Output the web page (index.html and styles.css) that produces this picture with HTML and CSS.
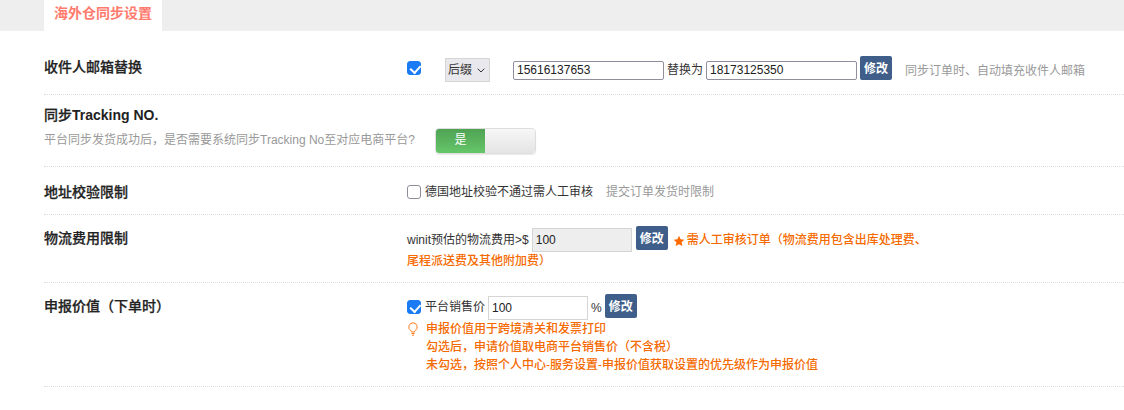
FILE: index.html
```html
<!DOCTYPE html>
<html lang="zh-CN">
<head>
<meta charset="utf-8">
<title>海外仓同步设置</title>
<link rel="stylesheet" href="styles.css">
</head>
<body>
<div class="tabbar"><div class="tab">海外仓同步设置</div></div>
<div class="settings">
  <section class="row row-email">
    <div class="label">收件人邮箱替换</div>
    <div class="controls line email-line">
      <input class="check raised" type="checkbox" checked>
      <span class="select-wrap">
        <select class="select"><option>后缀</option></select>
        <svg class="chevron" viewBox="0 0 8 5" width="8" height="5"><path d="M.7.7 4 4l3.3-3.3" fill="none" stroke="#333" stroke-width="1"/></svg>
      </span>
      <input class="text first" type="text" value="15616137653">
      <span class="between">替换为</span>
      <input class="text" type="text" value="18173125350">
      <button class="btn raised">修改</button>
      <span class="hint hint-email">同步订单时、自动填充收件人邮箱</span>
    </div>
  </section>
  <section class="row row-tracking">
    <div class="label-wide">
      <div class="label">同步<span class="latin">Tracking NO.</span></div>
      <div class="desc">平台同步发货成功后，是否需要系统同步Tracking No至对应电商平台?</div>
    </div>
    <div class="toggle"><span class="toggle-on">是</span><span class="toggle-off"></span></div>
  </section>
  <section class="row row-address">
    <div class="label">地址校验限制</div>
    <div class="controls line">
      <input class="check" type="checkbox">
      <span class="check-text">德国地址校验不通过需人工审核</span>
      <span class="hint hint-address">提交订单发货时限制</span>
    </div>
  </section>
  <section class="row row-freight">
    <div class="label">物流费用限制</div>
    <div class="controls">
      <div class="line">
        <span>winit预估的物流费用&gt;$</span>
        <input class="num disabled" type="text" value="100" readonly>
        <button class="btn raised freight-btn">修改</button>
        <svg class="star" viewBox="0 0 24 24" width="12" height="12"><path d="M12 1.5l3.2 7 7.6.9-5.6 5.2 1.5 7.6L12 18.4l-6.7 3.8 1.5-7.6L1.200 9.400l7.600-.9z" fill="#ff6a00"/></svg>
        <span class="warn warn-first">需人工审核订单（物流费用包含出库处理费、</span>
      </div>
      <div class="warn warn-second">尾程派送费及其他附加费）</div>
    </div>
  </section>
  <section class="row row-declare">
    <div class="label">申报价值（下单时）</div>
    <div class="controls">
      <div class="line declare-line">
        <input class="check" type="checkbox" checked>
        <span class="check-text">平台销售价</span>
        <input class="num" type="text" value="100">
        <span class="percent">%</span>
        <button class="btn raised">修改</button>
      </div>
      <div class="notes">
        <svg class="bulb" viewBox="0 0 12 14" width="12" height="14"><path d="M6 .8a4.200 4.200 0 0 0-2.300 7.700c.5.4.8.9.8 1.500h3c0-.6.3-1.100.8-1.500A4.200 4.200 0 0 0 6 .8z" fill="none" stroke="#ff7a1a" stroke-width="1"/><path d="M4.500 11.500h3M5 13.200h2" stroke="#ff7a1a" stroke-width="1" fill="none"/></svg>
        <div class="warn note-text">申报价值用于跨境清关和发票打印<br>勾选后，申请价值取电商平台销售价（不含税）<br>未勾选，按照个人中心-服务设置-申报价值获取设置的优先级作为申报价值</div>
      </div>
    </div>
  </section>
</div>
</body>
</html>
```
FILE: styles.css
```css
* { box-sizing: border-box; }
html, body { margin: 0; padding: 0; }
body {
  background: #fff;
  color: #333;
  font-family: "Liberation Sans", "Noto Sans CJK SC", sans-serif;
  font-size: 12px;
  line-height: 18px;
  width: 1124px;
  height: 410px;
  overflow: hidden;
}
.tabbar { height: 31px; background: #eee; padding-left: 44px; }
.tab {
  width: 118px; height: 31px; background: #fff; color: #ff7b6e;
  font-size: 14px; font-weight: 700; line-height: 27px; text-align: center;
}
.settings { padding-left: 44px; }
.row { display: flex; align-items: flex-start; border-bottom: 1px dotted #ddd; }
.row-email { height: 64px; padding-top: 26px; }
.email-line { margin-top: 1px; }
.row-tracking { height: 72px; padding-top: 10px; }
.row-address { height: 48px; padding-top: 15px; }
.row-address .line { margin-top: 1px; }
.row-freight { height: 68px; padding-top: 13px; }
.row-declare { height: 104px; padding-top: 13px; }
.label { width: 363px; flex: none; font-size: 14px; font-weight: 500; line-height: 20px; color: #222; -webkit-text-stroke: .25px #222; }
.latin { font-weight: 700; -webkit-text-stroke: 0; }
.label-wide { width: 391px; flex: none; }
.label-wide .label { width: auto; }
.desc { color: #999; font-size: 12px; margin-top: 6px; white-space: nowrap; }
.controls { flex: none; }
.line { display: flex; align-items: center; white-space: nowrap; }
.check {
  appearance: none; -webkit-appearance: none; margin: 0; width: 14px; height: 14px;
  flex: none; position: relative; background: #fff; border: 1.5px solid #8e8e9a; border-radius: 3px;
}
.check:checked { background: #1a7bf5; border-color: #1a7bf5; }
.check:checked::after {
  content: ""; position: absolute; left: 3.500px; top: 0.500px; width: 4.500px; height: 8px;
  border: solid #fff; border-width: 0 2px 2px 0; transform: rotate(42deg);
}
.declare-line .check, .declare-line .check-text { margin-bottom: 2px; }
.select-wrap { position: relative; width: 45px; height: 24px; margin-left: 24px; flex: none; }
.select {
  appearance: none; -webkit-appearance: none; display: block; width: 45px; height: 24px; margin: 0; padding: 0 0 0 2px;
  background: #e9e9ed; border: 1px solid #d5d5d5; border-radius: 0; color: #333;
  font: 12px "Liberation Sans", "Noto Sans CJK SC", sans-serif;
}
.chevron { position: absolute; right: 5px; top: 10px; }
.text {
  width: 151px; height: 19px; margin: 0; padding: 0 3px; border: 1px solid #8f8f9d; border-radius: 2px;
  font: 12px "Liberation Sans", sans-serif; color: #222; background: #fff;
}
.text.first { margin-left: 23px; }
.between { margin: 0 3px; }
.btn {
  width: 32px; height: 24px; margin: 0 0 0 3px; padding: 0 0 2px; border: 0; border-radius: 2px;
  background: #3f5f8a; color: #fff; font: 700 12px "Liberation Sans", "Noto Sans CJK SC", sans-serif;
  flex: none;
}
.raised { position: relative; top: -2px; }
.hint { color: #999; }
.hint-email { margin: 2px 0 0 13px; }
.hint-address { margin-left: 13px; }
.toggle {
  display: flex; width: 101px; height: 26px; margin-top: 23px; border: 1px solid #ddd; border-radius: 4px;
  overflow: hidden; flex: none; box-shadow: 0 1px 1px rgba(0,0,0,.08);
}
.toggle-on {
  width: 49px; color: #fff; text-align: center; line-height: 22px;
  background: linear-gradient(#4fa354, #66c669);
}
.toggle-off { flex: 1; background: linear-gradient(#f7f7f7, #e4e4e4); }
.check-text { margin-left: 4px; }
.num {
  width: 100px; height: 24px; margin: 0 0 0 3px; padding: 0 3px; border: 1px solid #d5d5d5;
  font: 12px "Liberation Sans", sans-serif; color: #222; background: #fff;
}
.num.disabled { background: #eee; }
.percent { margin: 0 0 0 3px; }
.freight-btn { margin-left: 4px; }
.star { margin-left: 5px; margin-top: 1px; flex: none; }
.warn { color: #f56a00; font-weight: 500; }
.warn-first { margin-left: 2px; }
.warn-second { margin-top: -1px; line-height: 20px; }
.notes { display: flex; margin-top: 0; }
.bulb { flex: none; margin: 2px 7px 0 0; }
.note-text { line-height: 18px; }
```
